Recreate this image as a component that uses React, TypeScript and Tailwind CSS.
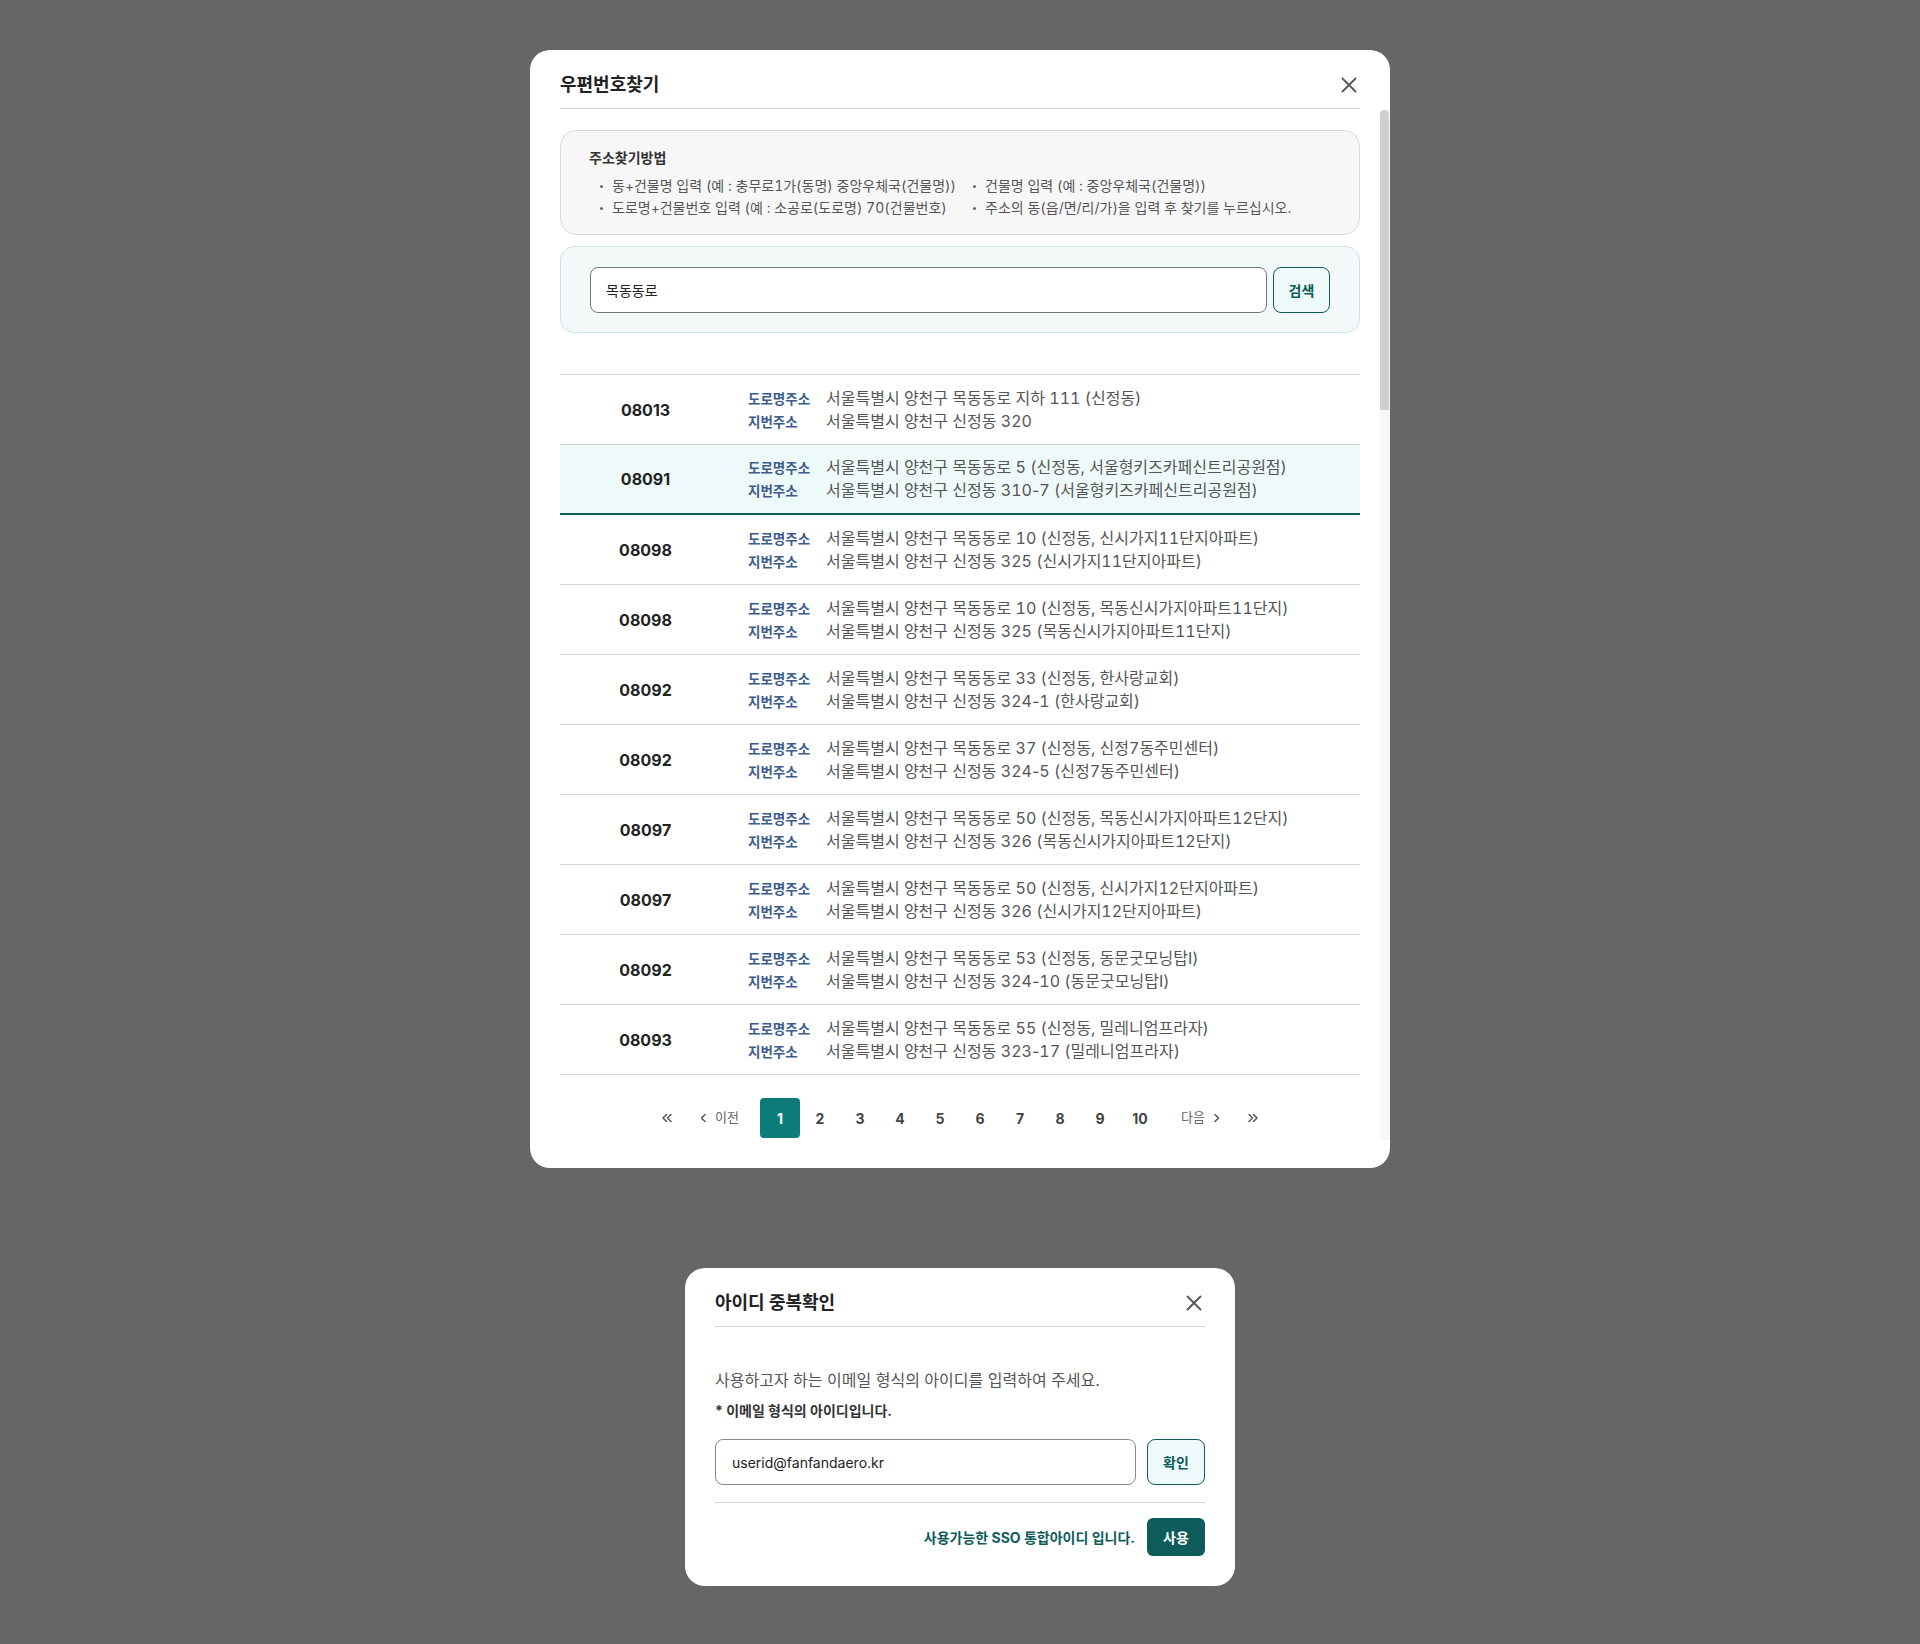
import React from 'react'

type Row = { zip: string; road: string; jibun: string }

const rows: Row[] = [
  { zip: '08013', road: '서울특별시 양천구 목동동로 지하 111 (신정동)', jibun: '서울특별시 양천구 신정동 320' },
  { zip: '08091', road: '서울특별시 양천구 목동동로 5 (신정동, 서울형키즈카페신트리공원점)', jibun: '서울특별시 양천구 신정동 310-7 (서울형키즈카페신트리공원점)' },
  { zip: '08098', road: '서울특별시 양천구 목동동로 10 (신정동, 신시가지11단지아파트)', jibun: '서울특별시 양천구 신정동 325 (신시가지11단지아파트)' },
  { zip: '08098', road: '서울특별시 양천구 목동동로 10 (신정동, 목동신시가지아파트11단지)', jibun: '서울특별시 양천구 신정동 325 (목동신시가지아파트11단지)' },
  { zip: '08092', road: '서울특별시 양천구 목동동로 33 (신정동, 한사랑교회)', jibun: '서울특별시 양천구 신정동 324-1 (한사랑교회)' },
  { zip: '08092', road: '서울특별시 양천구 목동동로 37 (신정동, 신정7동주민센터)', jibun: '서울특별시 양천구 신정동 324-5 (신정7동주민센터)' },
  { zip: '08097', road: '서울특별시 양천구 목동동로 50 (신정동, 목동신시가지아파트12단지)', jibun: '서울특별시 양천구 신정동 326 (목동신시가지아파트12단지)' },
  { zip: '08097', road: '서울특별시 양천구 목동동로 50 (신정동, 신시가지12단지아파트)', jibun: '서울특별시 양천구 신정동 326 (신시가지12단지아파트)' },
  { zip: '08092', road: '서울특별시 양천구 목동동로 53 (신정동, 동문굿모닝탑I)', jibun: '서울특별시 양천구 신정동 324-10 (동문굿모닝탑I)' },
  { zip: '08093', road: '서울특별시 양천구 목동동로 55 (신정동, 밀레니엄프라자)', jibun: '서울특별시 양천구 신정동 323-17 (밀레니엄프라자)' },
]

function CloseIcon() {
  return (
    <svg width="16" height="16" viewBox="0 0 16 16" fill="none" stroke="#555" strokeWidth="1.8" strokeLinecap="round">
      <path d="M1.5 1.5l13 13M14.5 1.5l-13 13" />
    </svg>
  )
}

function Chevron({ dir, double }: { dir: 'left' | 'right'; double?: boolean }) {
  const flip = dir === 'right' ? 'scale(-1,1) translate(-12,0)' : undefined
  return (
    <svg width={double ? 12 : 7} height="10" viewBox={double ? '0 0 12 10' : '0 0 7 10'} fill="none" stroke="#555" strokeWidth="1.5" strokeLinecap="round" strokeLinejoin="round">
      {double ? (
        <g transform={flip}>
          <path d="M5.5 1.5L2 5l3.5 3.5M10 1.5L6.5 5 10 8.5" />
        </g>
      ) : dir === 'left' ? (
        <path d="M5 1.5L1.5 5 5 8.5" />
      ) : (
        <path d="M2 1.5L5.5 5 2 8.5" />
      )}
    </svg>
  )
}

function Bullet({ children }: { children: React.ReactNode }) {
  return (
    <div className="flex items-center gap-[9px] leading-[22px]">
      <span className="w-[3px] h-[3px] rounded-full bg-[#666]" />
      <span>{children}</span>
    </div>
  )
}

// 하이픈은 tabular 숫자 폭에서 빼준다
function Addr({ text }: { text: string }) {
  const parts = text.split('-')
  return (
    <span className="text-[16px] text-[#555]">
      {parts.map((p, i) => (
        <React.Fragment key={i}>
          {i > 0 && <span className="normal-nums">-</span>}
          {p}
        </React.Fragment>
      ))}
    </span>
  )
}

function PostcodeModal() {
  return (
    <div className="relative w-[860px] bg-white rounded-[20px] px-[30px] pb-[30px] tabular-nums">
      {/* 스크롤바 */}
      <div className="absolute right-0 top-[60px] w-[10px] h-[1030px] bg-[#f7f7f7]">
        <div className="w-[9px] h-[300px] rounded-t-full bg-[#cfcfcf]" />
      </div>

      <div className="flex items-center justify-between pt-[22px] pb-[10px] border-b border-[#d4d4d4]">
        <h2 className="text-[18px] leading-[26px] font-bold text-[#222]">우편번호찾기</h2>
        <button className="mr-[3px]">
          <CloseIcon />
        </button>
      </div>

      <div className="mt-[21px] rounded-[16px] border border-[#d9d9d9] bg-[#f7f7f7] pl-[28px] pt-[17px] pb-[15px] text-[14px] text-[#555]">
        <p className="font-bold text-[#333] leading-[20px]">주소찾기방법</p>
        <div className="mt-[7px] pl-[11px] grid grid-cols-[373px_1fr]">
          <Bullet>동+건물명 입력 (예 : 충무로1가(동명) 중앙우체국(건물명))</Bullet>
          <Bullet>건물명 입력 (예 : 중앙우체국(건물명))</Bullet>
          <Bullet>도로명+건물번호 입력 (예 : 소공로(도로명) 70(건물번호)</Bullet>
          <Bullet>주소의 동(읍/면/리/가)을 입력 후 찾기를 누르십시오.</Bullet>
        </div>
      </div>

      <div className="mt-[11px] rounded-[14px] border border-[#c6e6e6] bg-[#f3f8f8] px-[29px] pt-[20px] pb-[19px] flex gap-[6px]">
        <div className="flex-1 h-[46px] rounded-[8px] border border-[#777] bg-white flex items-center px-[15px] text-[14px] text-[#222]">
          목동동로
        </div>
        <button className="w-[57px] h-[46px] rounded-[8px] border border-[#0d5c5b] bg-[#eefafa] text-[14px] font-bold text-[#0d5c5b]">
          검색
        </button>
      </div>

      <div className="mt-[41px] border-t border-[#d4d4d4]">
        {rows.map((r, i) => {
          const on = i === 1
          return (
            <div
              key={i}
              className={
                on
                  ? 'h-[70px] flex items-center bg-[#eefafa] border-b-2 border-[#0d5c5b]'
                  : 'h-[70px] flex items-center border-b border-[#d4d4d4]'
              }
            >
              <div className="w-[171px] text-center text-[16px] font-bold text-[#222] normal-nums">{r.zip}</div>
              <div className="pl-[17px] flex flex-col">
                <div className="flex items-baseline leading-[22px]">
                  <span className="w-[78px] text-[13.5px] font-semibold text-[#3d5c8c]">도로명주소</span>
                  <Addr text={r.road} />
                </div>
                <div className="flex items-baseline leading-[22px]">
                  <span className="w-[78px] text-[13.5px] font-semibold text-[#3d5c8c]">지번주소</span>
                  <Addr text={r.jibun} />
                </div>
              </div>
            </div>
          )
        })}
      </div>

      <div className="mt-[23px] flex items-center justify-center text-[14px] normal-nums">
        <button className="w-10 h-10 flex items-center justify-center">
          <Chevron dir="left" double />
        </button>
        <button className="ml-[13px] mr-[21px] flex items-center gap-[8px] text-[13px] text-[#666]">
          <Chevron dir="left" />
          이전
        </button>
        {[1, 2, 3, 4, 5, 6, 7, 8, 9, 10].map((n) => (
          <button
            key={n}
            className={
              n === 1
                ? 'w-10 h-10 rounded-[4px] bg-[#0e7c7a] text-white font-bold'
                : 'w-10 h-10 text-[#444] font-bold'
            }
          >
            {n}
          </button>
        ))}
        <button className="ml-[21px] mr-[13px] flex items-center gap-[8px] text-[13px] text-[#666]">
          다음
          <Chevron dir="right" />
        </button>
        <button className="w-10 h-10 flex items-center justify-center">
          <Chevron dir="right" double />
        </button>
      </div>
    </div>
  )
}

function IdCheckModal() {
  return (
    <div className="w-[550px] bg-white rounded-[20px] px-[30px] pb-[30px]">
      <div className="flex items-center justify-between pt-[22px] pb-[10px] border-b border-[#d4d4d4]">
        <h2 className="text-[18px] leading-[26px] font-bold text-[#222]">아이디 중복확인</h2>
        <button className="mr-[3px]">
          <CloseIcon />
        </button>
      </div>

      <p className="mt-[42px] text-[16px] leading-[22px] text-[#555]">
        사용하고자 하는 이메일 형식의 아이디를 입력하여 주세요.
      </p>
      <p className="mt-[10px] text-[14px] leading-[20px] font-bold text-[#333]">* 이메일 형식의 아이디입니다.</p>

      <div className="mt-[18px] flex gap-[11px]">
        <div className="flex-1 h-[46px] rounded-[8px] border border-[#888] flex items-center px-[16px] text-[14px] text-[#222]">
          userid@fanfandaero.kr
        </div>
        <button className="w-[58px] h-[46px] rounded-[8px] border border-[#0d5c5b] bg-[#eefafa] text-[14px] font-bold text-[#0d5c5b]">
          확인
        </button>
      </div>

      <div className="mt-[17px] border-t border-[#d4d4d4] pt-[15px] flex items-center justify-end gap-[12px]">
        <span className="text-[14px] font-bold text-[#0d5c5b]">사용가능한 SSO 통합아이디 입니다.</span>
        <button className="w-[58px] h-[38px] rounded-[6px] bg-[#0d5c5b] text-[14px] font-bold text-white">사용</button>
      </div>
    </div>
  )
}

export default function App() {
  return (
    <div className="min-h-[1644px] bg-[#666666] flex flex-col items-center pt-[50px] gap-[100px] font-['Inter','Noto_Sans_CJK_KR',sans-serif]">
      <PostcodeModal />
      <IdCheckModal />
    </div>
  )
}
